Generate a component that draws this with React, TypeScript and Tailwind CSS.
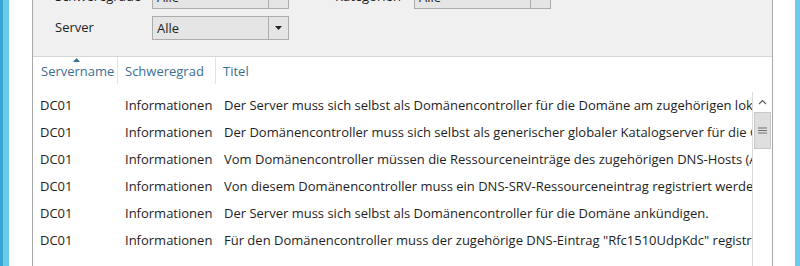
import React from "react";

const rows = [
  "Der Server muss sich selbst als Domänencontroller für die Domäne am zugehörigen lokalen Standort ankündigen.",
  "Der Domänencontroller muss sich selbst als generischer globaler Katalogserver für die Gesamtstruktur ankündigen.",
  "Vom Domänencontroller müssen die Ressourceneinträge des zugehörigen DNS-Hosts (A/AAAA) registriert werden.",
  "Von diesem Domänencontroller muss ein DNS-SRV-Ressourceneintrag registriert werden.",
  "Der Server muss sich selbst als Domänencontroller für die Domäne ankündigen.",
  "Für den Domänencontroller muss der zugehörige DNS-Eintrag \"Rfc1510UdpKdc\" registriert werden.",
];

function Dropdown() {
  return (
    <div className="flex h-[24px] w-[137px] border border-[#acacac] bg-[#e5e5e5]">
      <div className="flex-1 pl-[4px] leading-[22px]">Alle</div>
      <div className="flex w-[20px] items-center justify-center border-l border-[#acacac]">
        <svg width="7" height="4" viewBox="0 0 7 4">
          <path d="M0 0 H7 L3.5 4 Z" fill="#222" />
        </svg>
      </div>
    </div>
  );
}

export default function App() {
  const font = { fontFamily: '"Open Sans", "Noto Sans", sans-serif' };
  return (
    <div
      className="flex h-[266px] w-[800px] overflow-hidden bg-white text-[13px] text-[#1e1e1e]"
      style={font}
    >
      <div className="h-full w-[9px] border-l-[3px] border-[#3aa6d4] bg-[#6ccaec]" />
      <div className="w-[23px]" />
      <div className="flex h-full w-[741px] flex-col border-x border-[#a8a8a8]">
        <div className="flex h-[57px] flex-col justify-end gap-[7px] overflow-hidden border-b border-[#d6d6d6] bg-[#f0f0f0] pb-[16px]">
          <div className="flex h-[24px] shrink-0 items-center">
            <div className="w-[119px] pl-[22px]">Schweregrade</div>
            <Dropdown />
            <div className="w-[125px] pl-[46px]">Kategorien</div>
            <Dropdown />
          </div>
          <div className="flex h-[24px] shrink-0 items-center">
            <div className="w-[119px] pl-[22px]">Server</div>
            <Dropdown />
          </div>
        </div>
        <div className="flex h-[27px] text-[#3b6f93]">
          <div className="relative w-[85px] border-r border-[#e3e3e3] pl-[8px] pt-[5px]">
            Servername
            <svg
              className="absolute left-[40px] top-[1px]"
              width="7"
              height="4"
              viewBox="0 0 7 4"
            >
              <path d="M3.5 0 L7 4 H0 Z" fill="#3b6f93" />
            </svg>
          </div>
          <div className="w-[98px] border-r border-[#e3e3e3] pl-[7px] pt-[5px]">Schweregrad</div>
          <div className="flex-1 pl-[7px] pt-[5px]">Titel</div>
        </div>
        <div className="flex min-h-0 flex-1 pt-[8px]">
          <div className="min-w-0 flex-1 overflow-hidden">
            {rows.map((t, i) => (
              <div key={i} className="flex h-[27px] items-center whitespace-nowrap">
                <div className="w-[85px] shrink-0 pl-[7px]">DC01</div>
                <div className="w-[99px] shrink-0 pl-[7px]">Informationen</div>
                <div className="pl-[7px]">{t}</div>
              </div>
            ))}
          </div>
          <div className="flex w-[20px] shrink-0 flex-col border-l border-[#dcdcdc] bg-white">
            <div className="flex h-[20px] items-center justify-center">
              <svg width="9" height="6" viewBox="0 0 9 6">
                <path d="M1 5 L4.5 1.5 L8 5" stroke="#606060" strokeWidth="1.2" fill="none" />
              </svg>
            </div>
            <div className="mx-[1px] flex h-[37px] items-center justify-center border border-[#c8c8c8] bg-[#dedede]">
              <svg width="9" height="8" viewBox="0 0 9 8">
                <path d="M0 1 H9 M0 3.5 H9 M0 6 H9" stroke="#707070" strokeWidth="1" />
              </svg>
            </div>
          </div>
        </div>
      </div>
      <div className="w-[22px]" />
      <div className="h-full w-[5px] bg-[#6ccaec]" />
    </div>
  );
}
